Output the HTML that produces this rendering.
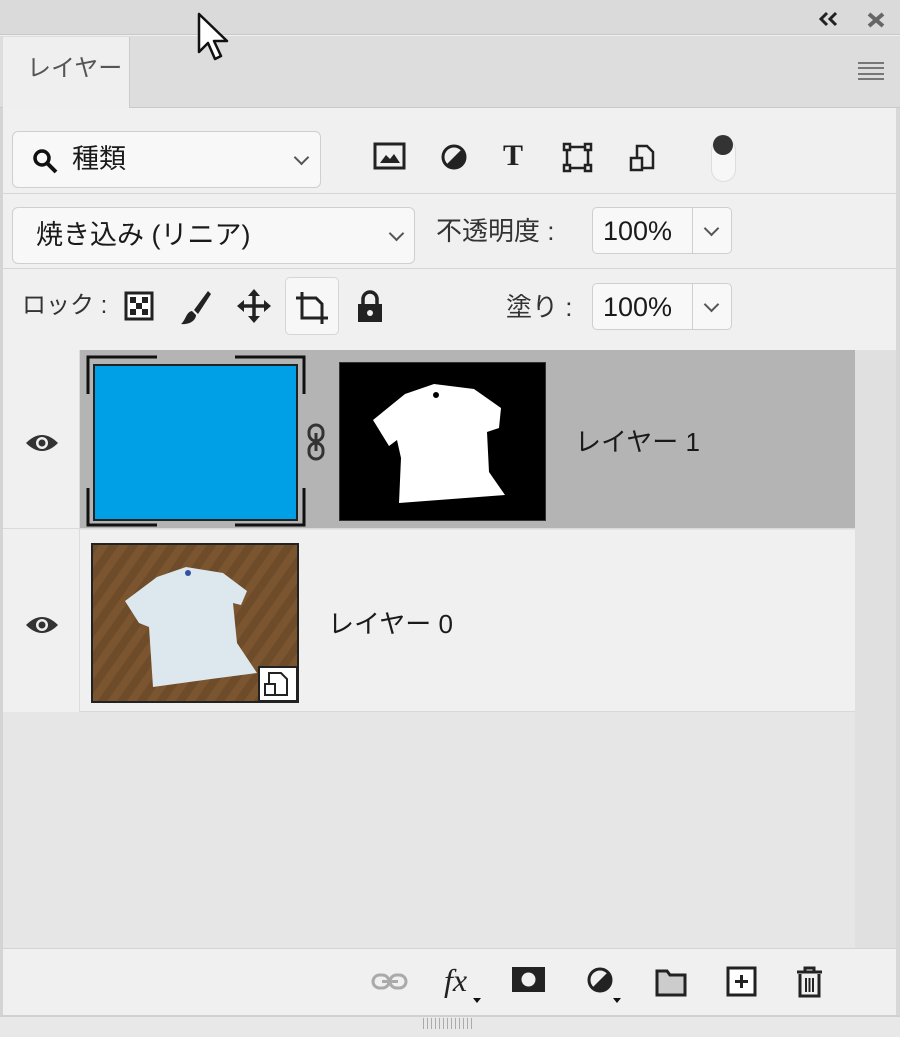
<!DOCTYPE html>
<html><head><meta charset="utf-8"><style>
*{margin:0;padding:0;box-sizing:border-box}
body{width:900px;height:1037px;background:#f0f0f0;position:relative;overflow:hidden;font-family:"Liberation Sans","Noto Sans CJK JP",sans-serif;color:#1a1a1a}
.a{position:absolute}
.box{position:absolute;background:#f8f8f8;border:1px solid #cfcfcf;border-radius:6px}
.t{position:absolute;font-size:24px;line-height:1;white-space:nowrap}
.chev{position:absolute;width:11px;height:11px;border-right:2px solid #555;border-bottom:2px solid #555;transform:rotate(45deg)}
</style></head><body>
<!-- top bar -->
<div class="a" style="left:0;top:0;width:900px;height:35px;background:#dadada;border-bottom:1px solid #c8c8c8"></div>
<svg class="a" style="left:818px;top:11px" width="22" height="16" fill="none" stroke="#222" stroke-width="3"><path d="M9 2 L3 8 L9 14 M18 2 L12 8 L18 14"/></svg>
<svg class="a" style="left:866px;top:11px" width="20" height="18" fill="none" stroke="#666" stroke-width="4"><path d="M3 3 L17 15 M17 3 L3 15"/></svg>
<!-- tab row -->
<div class="a" style="left:0;top:36px;width:900px;height:72px;background:#dddddd;border-bottom:1px solid #cacaca"></div>
<div class="a" style="left:3px;top:37px;width:127px;height:71px;background:#efefef;border-right:1px solid #cacaca"></div>
<div class="t" style="left:27px;top:57px;color:#555;font-size:24px">レイヤー</div>
<div class="a" style="left:858px;top:62px;width:26px;height:18px;border-top:2px solid #777;border-bottom:2px solid #777"></div>
<div class="a" style="left:858px;top:67px;width:26px;height:8px;border-top:2px solid #777;border-bottom:2px solid #777"></div>
<div class="a" style="left:0;top:108px;width:3px;height:910px;background:#d4d4d4"></div>
<div class="a" style="left:896px;top:108px;width:4px;height:910px;background:#d8d8d8"></div>
<!-- filter row -->
<div class="box" style="left:12px;top:131px;width:309px;height:57px"></div>
<svg class="a" style="left:32px;top:148px" width="28" height="28" viewBox="0 0 28 28"><circle cx="10" cy="10" r="7" fill="none" stroke="#111" stroke-width="3.5"/><path d="M15 15 L24 24" stroke="#111" stroke-width="4"/></svg>
<div class="t" style="left:72px;top:146px;font-size:27px">種類</div>
<div class="chev" style="left:296px;top:152px"></div>
<svg class="a" style="left:373px;top:142px" width="34" height="30"><rect x="2" y="2" width="29" height="24" fill="none" stroke="#222" stroke-width="3"/><path d="M7 21 L13 13 L17 17 L21 12 L27 21Z" fill="#222"/></svg>
<svg class="a" style="left:439px;top:142px" width="30" height="30"><circle cx="15" cy="15" r="11" fill="none" stroke="#222" stroke-width="3"/><path d="M23 7 A11 11 0 0 1 7 23Z" fill="#222"/></svg>
<div class="t" style="left:503px;top:141px;font-family:'Liberation Serif',serif;font-weight:bold;font-size:30px;color:#222">T</div>
<svg class="a" style="left:562px;top:142px" width="32" height="32"><rect x="5" y="5" width="21" height="21" fill="none" stroke="#222" stroke-width="2.5"/><g fill="#f0f0f0" stroke="#222" stroke-width="2.5"><rect x="2" y="2" width="6" height="6"/><rect x="23" y="2" width="6" height="6"/><rect x="2" y="23" width="6" height="6"/><rect x="23" y="23" width="6" height="6"/></g></svg>
<svg class="a" style="left:628px;top:142px" width="30" height="34"><path d="M9 4 H19 L25 10 V26 H9Z" fill="none" stroke="#222" stroke-width="2.5"/><rect x="3" y="16" width="11" height="12" fill="#f0f0f0" stroke="#222" stroke-width="2.5"/></svg>
<div class="a" style="left:711px;top:138px;width:25px;height:44px;border-radius:13px;background:#f7f7f7;border:1px solid #ddd"></div>
<div class="a" style="left:713px;top:135px;width:20px;height:20px;border-radius:50%;background:#333"></div>
<div class="a" style="left:0;top:193px;width:900px;height:1px;background:#d6d6d6"></div>
<!-- blend row -->
<div class="box" style="left:12px;top:207px;width:403px;height:57px"></div>
<div class="t" style="left:36px;top:222px;font-size:27px">焼き込み (リニア)</div>
<div class="chev" style="left:391px;top:228px"></div>
<div class="t" style="left:436px;top:218px;font-size:26px;color:#333">不透明度 :</div>
<div class="box" style="left:592px;top:207px;width:140px;height:47px;border-radius:5px"></div>
<div class="a" style="left:692px;top:208px;width:1px;height:45px;background:#cfcfcf"></div>
<div class="t" style="left:603px;top:218px;font-size:27px">100%</div>
<div class="chev" style="left:706px;top:223px"></div>
<div class="a" style="left:0;top:268px;width:900px;height:1px;background:#d6d6d6"></div>
<!-- lock row -->
<div class="t" style="left:22px;top:294px;font-size:24px;color:#333">ロック :</div>
<svg class="a" style="left:124px;top:291px" width="30" height="30"><rect x="2" y="2" width="26" height="26" fill="#fff" stroke="#222" stroke-width="3"/><g fill="#222"><rect x="6" y="6" width="6" height="6"/><rect x="18" y="6" width="6" height="6"/><rect x="12" y="12" width="6" height="6"/><rect x="6" y="18" width="6" height="6"/><rect x="18" y="18" width="6" height="6"/></g></svg>
<svg class="a" style="left:178px;top:288px" width="36" height="40"><path d="M30 3 L16 22 L20 26 L33 6Z" fill="#222"/><path d="M14 23 C8 24 8 32 3 36 C12 37 18 32 18 27Z" fill="#222"/></svg>
<svg class="a" style="left:236px;top:288px" width="36" height="36"><path d="M18 4 V32 M4 18 H32" stroke="#222" stroke-width="3.5"/><path d="M18 1 L12 8 H24Z M18 35 L12 28 H24Z M1 18 L8 12 V24Z M35 18 L28 12 V24Z" fill="#222"/></svg>
<div class="a" style="left:285px;top:277px;width:54px;height:58px;border:1px solid #d5d5d5;border-radius:5px;background:#f7f7f7"></div>
<svg class="a" style="left:294px;top:290px" width="36" height="36"><path d="M8 2 V28 H34 M2 8 H22 L28 14 V34" fill="none" stroke="#222" stroke-width="3"/></svg>
<svg class="a" style="left:355px;top:290px" width="30" height="34"><path d="M8 14 V9 A7 7 0 0 1 22 9 V14" fill="none" stroke="#222" stroke-width="3.5"/><rect x="3" y="14" width="24" height="18" fill="#222"/><circle cx="15" cy="23" r="3" fill="#f0f0f0"/></svg>
<div class="t" style="left:506px;top:294px;font-size:26px;color:#333">塗り :</div>
<div class="box" style="left:592px;top:283px;width:140px;height:47px;border-radius:5px"></div>
<div class="a" style="left:692px;top:284px;width:1px;height:45px;background:#cfcfcf"></div>
<div class="t" style="left:603px;top:294px;font-size:27px">100%</div>
<div class="chev" style="left:706px;top:299px"></div>
<!-- layer list -->
<div class="a" style="left:3px;top:350px;width:852px;height:598px;background:#e6e6e6"></div>
<div class="a" style="left:855px;top:350px;width:41px;height:598px;background:#e0e0e0"></div>
<div class="a" style="left:3px;top:350px;width:77px;height:362px;background:#f0f0f0"></div>
<div class="a" style="left:3px;top:528px;width:852px;height:1px;background:#dadada"></div>
<div class="a" style="left:80px;top:350px;width:775px;height:178px;background:#b4b4b4"></div>
<div class="a" style="left:80px;top:530px;width:775px;height:182px;background:#f0f0f0;border-bottom:1px solid #d8d8d8"></div>
<div class="a" style="left:79px;top:350px;width:1px;height:362px;background:#dcdcdc"></div>
<!-- eyes -->
<svg class="a" style="left:24px;top:431px" width="36" height="24"><path d="M2 12 Q18 -4 34 12 Q18 28 2 12Z" fill="#333"/><circle cx="18" cy="12" r="6" fill="#f0f0f0"/><circle cx="18" cy="12" r="3.5" fill="#333"/></svg>
<svg class="a" style="left:24px;top:613px" width="36" height="24"><path d="M2 12 Q18 -4 34 12 Q18 28 2 12Z" fill="#333"/><circle cx="18" cy="12" r="6" fill="#f0f0f0"/><circle cx="18" cy="12" r="3.5" fill="#333"/></svg>
<!-- layer 1 -->
<div class="a" style="left:93px;top:364px;width:205px;height:157px;background:#00a0e6;border:2px solid #222"></div>
<svg class="a" style="left:85px;top:354px" width="222" height="174" fill="none" stroke="#111" stroke-width="3"><path d="M3 40 V3 H72 M150 3 H219 V40 M3 134 V171 H72 M150 171 H219 V134"/></svg>
<svg class="a" style="left:305px;top:423px" width="22" height="38"><rect x="4" y="2" width="14" height="16" rx="7" fill="none" stroke="#333" stroke-width="3"/><rect x="4" y="20" width="14" height="16" rx="7" fill="none" stroke="#333" stroke-width="3"/><path d="M11 10 V28" stroke="#333" stroke-width="3"/></svg>
<svg class="a" style="left:339px;top:362px" width="207" height="159"><rect x="0" y="0" width="207" height="159" fill="#000" stroke="#333" stroke-width="2"/><path d="M34 58 L66 32 L95 22 L135 27 L162 46 L160 66 L148 70 L150 110 L166 133 L60 141 L62 96 L58 78 L50 84 Z" fill="#fff"/><circle cx="97" cy="33" r="3" fill="#000"/></svg>
<div class="t" style="left:575px;top:429px;font-size:26px">レイヤー 1</div>
<!-- layer 0 -->
<svg class="a" style="left:91px;top:543px" width="208" height="160"><defs><pattern id="w" width="16" height="16" patternUnits="userSpaceOnUse" patternTransform="rotate(35)"><rect width="16" height="16" fill="#7a5530"/><rect width="8" height="16" fill="#6e4b29"/></pattern></defs><rect x="1" y="1" width="206" height="158" fill="url(#w)" stroke="#222" stroke-width="2"/><path d="M34 58 L66 34 L95 24 L132 30 L156 48 L150 62 L142 60 L146 100 L166 130 L120 136 L62 144 L58 84 L48 80Z" fill="#dde8ee"/><circle cx="97" cy="30" r="3" fill="#3050a0"/><rect x="168" y="124" width="38" height="34" fill="#fff" stroke="#222" stroke-width="2"/><path d="M178 130 H190 L196 136 V152 H178Z" fill="none" stroke="#222" stroke-width="2"/><rect x="174" y="141" width="10" height="11" fill="#fff" stroke="#222" stroke-width="2"/></svg>
<div class="t" style="left:328px;top:611px;font-size:26px">レイヤー 0</div>
<!-- bottom bar -->
<div class="a" style="left:3px;top:948px;width:893px;height:1px;background:#d4d4d4"></div>
<div class="a" style="left:3px;top:949px;width:893px;height:66px;background:#f0f0f0"></div>
<svg class="a" style="left:370px;top:970px" width="40" height="24"><rect x="3" y="5" width="16" height="13" rx="6.5" fill="none" stroke="#aaa" stroke-width="3"/><rect x="20" y="5" width="16" height="13" rx="6.5" fill="none" stroke="#aaa" stroke-width="3"/><path d="M12 11.5 H28" stroke="#aaa" stroke-width="3"/></svg>
<div class="t" style="left:444px;top:964px;font-family:'Liberation Serif',serif;font-style:italic;font-size:32px;color:#222">fx</div>
<div class="a" style="left:473px;top:998px;border:4px solid transparent;border-top:5px solid #111"></div>
<svg class="a" style="left:510px;top:965px" width="38" height="30"><rect x="2" y="2" width="33" height="25" fill="#222"/><circle cx="18.5" cy="14.5" r="7" fill="#f0f0f0"/></svg>
<svg class="a" style="left:586px;top:966px" width="30" height="30"><circle cx="14" cy="14" r="11" fill="none" stroke="#222" stroke-width="3"/><path d="M22 6 A11 11 0 0 1 6 22Z" fill="#222"/></svg>
<div class="a" style="left:613px;top:998px;border:4px solid transparent;border-top:5px solid #111"></div>
<svg class="a" style="left:654px;top:968px" width="34" height="30"><path d="M3 3 H13 L16 7 H31 V27 H3Z" fill="#ccc" stroke="#222" stroke-width="3"/></svg>
<svg class="a" style="left:726px;top:966px" width="32" height="32"><rect x="2" y="2" width="27" height="27" fill="#fff" stroke="#222" stroke-width="3"/><path d="M15.5 9 V22 M9 15.5 H22" stroke="#222" stroke-width="3"/></svg>
<svg class="a" style="left:795px;top:965px" width="30" height="34"><path d="M2 7 H27 M10 7 V3 H19 V7" fill="none" stroke="#222" stroke-width="3"/><path d="M5 9 V31 H24 V9" fill="none" stroke="#222" stroke-width="3"/><path d="M11 13 V27 M14.5 13 V27 M18 13 V27" stroke="#222" stroke-width="2"/></svg>
<div class="a" style="left:0;top:1015px;width:900px;height:2px;background:#d0d0d0"></div>
<div class="a" style="left:0;top:1017px;width:900px;height:20px;background:#e8e8e8"></div>
<div class="a" style="left:423px;top:1018px;width:50px;height:11px;background:repeating-linear-gradient(90deg,#aaa 0 1px,transparent 1px 4px)"></div>
<!-- cursor -->
<svg class="a" style="left:196px;top:12px" width="36" height="52"><path d="M3 2 V40 L12 31 L19 47 L25 44 L18 29 L31 29Z" fill="#fff" stroke="#111" stroke-width="2.5" stroke-linejoin="round"/></svg>
</body></html>
